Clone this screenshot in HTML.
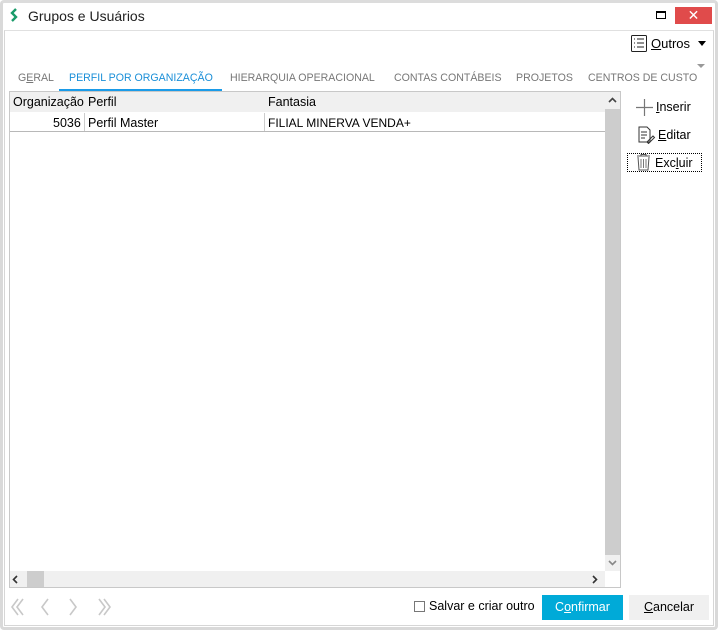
<!DOCTYPE html>
<html><head><meta charset="utf-8"><style>
*{margin:0;padding:0;box-sizing:border-box}
body{width:718px;height:630px;background:#fff;font-family:"Liberation Sans","DejaVu Sans",sans-serif;font-size:12px;color:#000;position:relative;overflow:hidden}
.frame{position:absolute;left:0;top:0;width:718px;height:630px;border:3px solid #d9d9d9;border-top:3px solid #dcdcdc;border-radius:4px}
.abs{position:absolute}
.tab{position:absolute;top:72px;font-size:10.6px;color:#777;white-space:nowrap}
</style></head><body>
<div class="frame"></div>
<svg class="abs" style="left:9px;top:8px" width="10" height="16" viewBox="0 0 10 16"><path d="M7 1 L3 5 L7 9 L3 13" stroke="#1a9b6a" stroke-width="2.4" fill="none"/></svg>
<div class="abs" style="left:28px;top:8px;font-size:14px;color:#222">Grupos e Usuários</div>
<div class="abs" style="left:656px;top:11px;width:10px;height:8px;border:1px solid #000;border-top:2px solid #000"></div>
<div class="abs" style="left:675px;top:7px;width:37px;height:17px;background:#e04b4b;color:#fff;text-align:center;font-size:14px;line-height:17px;font-weight:bold">✕</div>
<div class="abs" style="left:4px;top:30px;width:710px;height:596px;border:1px solid #d6d6d6;border-top:1px solid #e0e0e0"></div>
<svg class="abs" style="left:631px;top:35px" width="16" height="17" viewBox="0 0 16 17"><rect x="0.5" y="0.5" width="15" height="16" rx="1" fill="none" stroke="#222"/><path d="M3 4h1M3 8h1M3 12h1M6 4h7M6 8h7M6 12h7" stroke="#222"/></svg>
<div class="abs" style="left:651px;top:36px;font-size:13px"><u>O</u>utros</div>
<div class="abs" style="left:698px;top:41px;border:4px solid transparent;border-top:5px solid #000"></div>
<div class="abs" style="left:697px;top:64px;border:4px solid transparent;border-top:4px solid #999"></div>
<div class="tab" style="left:18px">G<u>E</u>RAL</div>
<div class="tab" style="left:69px;color:#1a8fd8">PERFIL POR ORGANIZAÇÃO</div>
<div class="abs" style="left:59px;top:89px;width:163px;height:2px;background:#1a9be8"></div>
<div class="tab" style="left:230px">HIERARQUIA OPERACIONAL</div>
<div class="tab" style="left:394px">CONTAS CONTÁBEIS</div>
<div class="tab" style="left:516px">PROJETOS</div>
<div class="tab" style="left:588px">CENTROS DE CUSTO</div>
<div class="abs" style="left:9px;top:91px;width:612px;height:497px;border:1px solid #c8c8c8"></div>
<div class="abs" style="left:10px;top:92px;width:595px;height:20px;background:#f0f0f0"></div>
<div class="abs" style="left:13px;top:95px;font-size:12.5px">Organização</div>
<div class="abs" style="left:88px;top:95px;font-size:12.5px">Perfil</div>
<div class="abs" style="left:268px;top:95px;font-size:12.5px">Fantasia</div>
<div class="abs" style="left:10px;top:131px;width:595px;height:1px;background:#b8b8b8"></div>
<div class="abs" style="left:84px;top:113px;width:1px;height:18px;background:#ccc"></div>
<div class="abs" style="left:264px;top:113px;width:1px;height:18px;background:#ccc"></div>
<div class="abs" style="left:53px;top:116px;font-size:12.5px">5036</div>
<div class="abs" style="left:88px;top:116px;font-size:12.5px">Perfil Master</div>
<div class="abs" style="left:268px;top:116px;font-size:12px">FILIAL MINERVA VENDA+</div>
<div class="abs" style="left:605px;top:92px;width:15px;height:479px;background:#f0f0f0"></div>
<div class="abs" style="left:605px;top:109px;width:15px;height:446px;background:#cdcdcd"></div>
<svg class="abs" style="left:608px;top:97px" width="9" height="6"><path d="M1 5l3.5-3.5L8 5" stroke="#444" stroke-width="1.6" fill="none"/></svg>
<svg class="abs" style="left:608px;top:560px" width="9" height="6"><path d="M1 1l3.5 3.5L8 1" stroke="#888" stroke-width="1.6" fill="none"/></svg>
<div class="abs" style="left:10px;top:571px;width:595px;height:16px;background:#f0f0f0"></div>
<div class="abs" style="left:27px;top:571px;width:17px;height:16px;background:#cdcdcd"></div>
<svg class="abs" style="left:12px;top:575px" width="6" height="9"><path d="M5 1L1.5 4.5L5 8" stroke="#333" stroke-width="1.6" fill="none"/></svg>
<svg class="abs" style="left:431px;top:0" width="0" height="0"></svg>
<svg class="abs" style="left:431px;top:575px;left:431px" width="0" height="0"></svg>
<svg class="abs" style="left:431px;top:575px" width="0" height="0"></svg>
<svg class="abs" style="left:431px;top:575px" width="0" height="0"></svg>
<svg class="abs" style="left:431px;top:575px" width="0" height="0"></svg>
<svg class="abs" style="left:431px;top:575px" width="0" height="0"></svg>
<svg class="abs" style="left:431px;top:575px" width="0" height="0"></svg>
<svg class="abs" style="left:592px;top:575px" width="6" height="9"><path d="M1 1l3.5 3.5L1 8" stroke="#333" stroke-width="1.6" fill="none"/></svg>
<svg class="abs" style="left:641px;top:0" width="0" height="0"></svg>
<svg class="abs" style="left:636px;top:99px" width="17" height="17"><path d="M8.5 0v17M0 8.5h17" stroke="#777" stroke-width="1.2"/></svg>
<div class="abs" style="left:656px;top:100px;font-size:12.5px"><u>I</u>nserir</div>
<svg class="abs" style="left:638px;top:126px" width="18" height="18" viewBox="0 0 18 18"><path d="M1 1h8l3 3v12H1z" fill="none" stroke="#333"/><path d="M3 6h6M3 9h6M3 12h4M9 16l6-6 1.5 1.5-6 6z" stroke="#333" fill="none"/></svg>
<div class="abs" style="left:658px;top:128px;font-size:12.5px"><u>E</u>ditar</div>
<div class="abs" style="left:627px;top:153px;width:75px;height:19px;border:1px dotted #000"></div>
<svg class="abs" style="left:636px;top:154px" width="15" height="17" viewBox="0 0 15 17"><path d="M1 2h13M5 2V0.5h5V2M2 3l1 13h9l1-13" fill="none" stroke="#555"/><path d="M5 5v9M7.5 5v9M10 5v9" stroke="#777"/></svg>
<div class="abs" style="left:655px;top:156px;font-size:12.5px">Exc<u>l</u>uir</div>
<svg class="abs" style="left:10px;top:598px" width="106" height="18" viewBox="0 0 106 18"><g stroke="#c8c8c8" stroke-width="1.6" fill="none"><path d="M8 1L2 9l6 8M13 1L7 9l6 8"/><path d="M38 1l-6 8 6 8"/><path d="M60 1l6 8-6 8"/><path d="M89 1l6 8-6 8M94 1l6 8-6 8"/></g></svg>
<div class="abs" style="left:414px;top:601px;width:11px;height:11px;border:1px solid #777"></div>
<div class="abs" style="left:429px;top:599px;font-size:12.5px">Salvar e criar outro</div>
<div class="abs" style="left:542px;top:595px;width:81px;height:25px;background:#00aad8;color:#fff;text-align:center;line-height:25px;font-size:12.5px">C<u>o</u>nfirmar</div>
<div class="abs" style="left:629px;top:595px;width:80px;height:25px;background:#f0f0f0;text-align:center;line-height:25px;font-size:12.5px"><u>C</u>ancelar</div>
</body></html>
